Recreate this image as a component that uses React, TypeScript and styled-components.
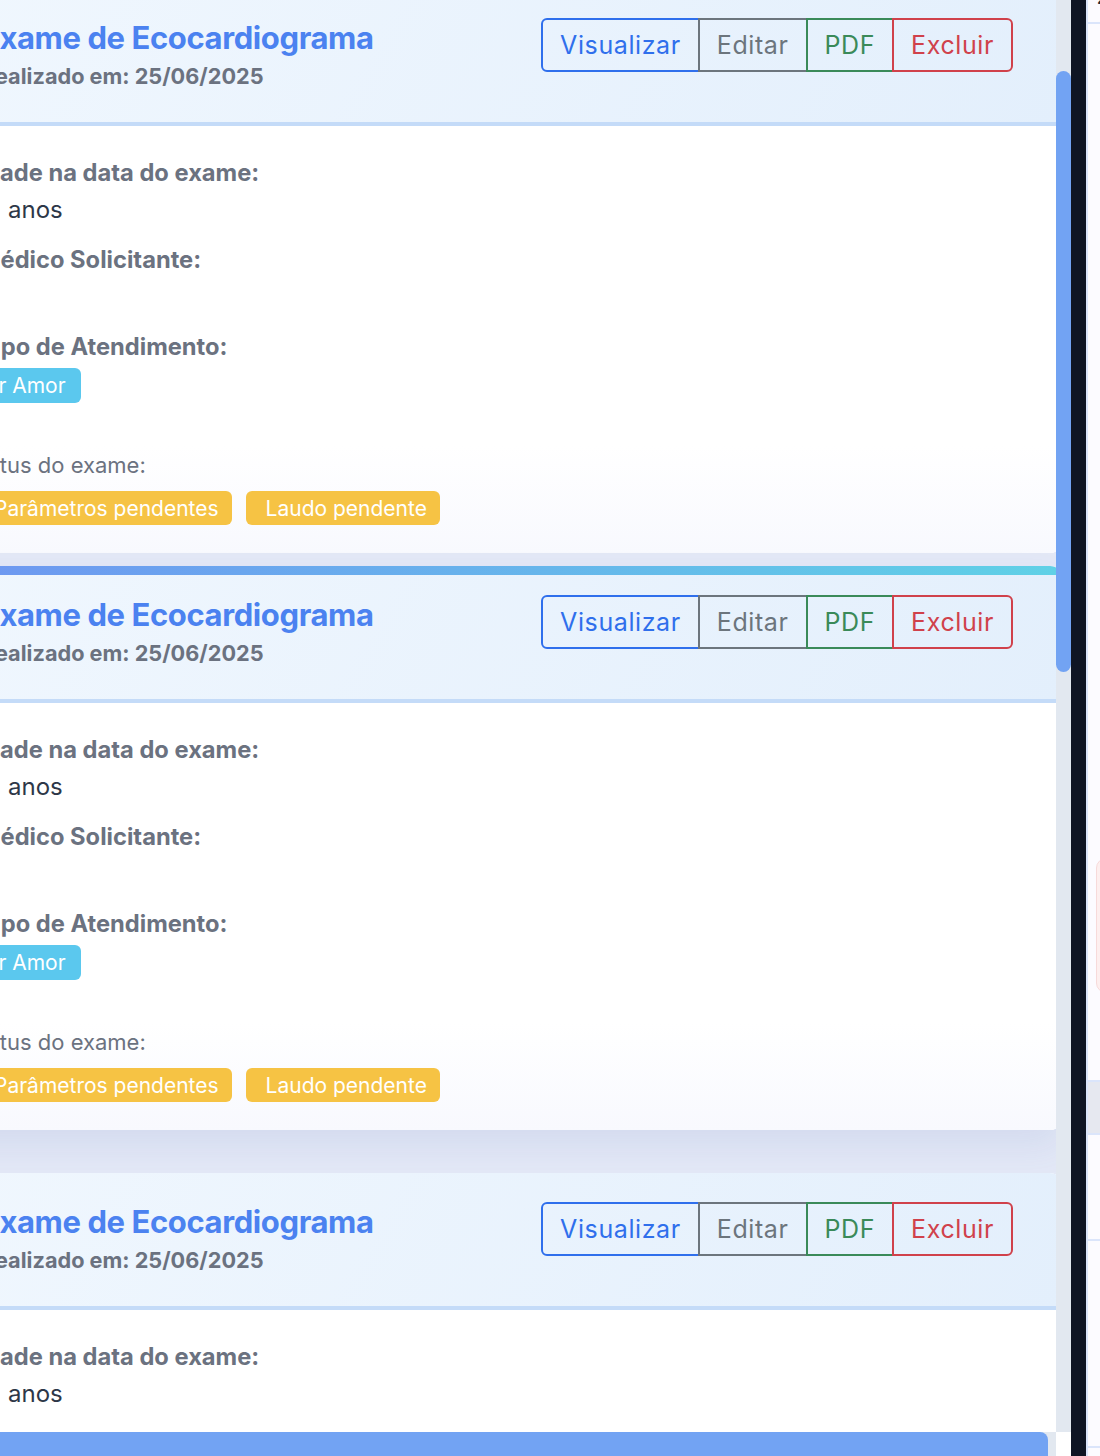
import React, { useLayoutEffect, useRef } from 'react';
import styled, { createGlobalStyle, css } from 'styled-components';

const GlobalStyle = createGlobalStyle`
  * { box-sizing: border-box; }
  html, body { margin: 0; padding: 0; height: 100%; overflow: hidden; }
  body {
    font-family: Inter, "Noto Sans", "Liberation Sans", sans-serif;
    background: #ffffff;
    -webkit-font-smoothing: antialiased;
  }
  #root { height: 100%; }
`;

const Shell = styled.div`
  display: flex;
  width: 1100px;
  height: 1456px;
  overflow: hidden;
`;

const Main = styled.main`
  width: 1071px;
  flex-shrink: 0;
  display: flex;
  flex-direction: column;
  background: #ffffff;
`;

const ScrollArea = styled.div`
  display: flex;
  height: 1432px;
  flex-shrink: 0;
`;

const Scroller = styled.div`
  flex: 1;
  min-width: 0;
  overflow: hidden;
  background: #e3e8f6;
`;

const ScrollTrack = styled.div`
  width: 15px;
  flex-shrink: 0;
  background: #e2e8f0;
  display: flex;
  flex-direction: column;
`;

const ScrollThumb = styled.div`
  margin-top: 71px;
  height: 601px;
  border-radius: 8px;
  background: #72a3f3;
`;

const List = styled.div`
  display: flex;
  flex-direction: column;
  gap: 28px;
  padding: 158px 0 322px;
  margin: 0 -6px 0 -60px;
`;

const Card = styled.article<{ $lifted?: boolean }>`
  position: relative;
  height: 564px;
  border-radius: 12px;
  overflow: hidden;
  background: #ffffff;

  ${(p) =>
    p.$lifted &&
    css`
      transform: translateY(-15px);
      box-shadow: 0 16px 34px rgba(80, 105, 190, 0.1);

      &::before {
        content: '';
        position: absolute;
        top: 0;
        left: 0;
        right: 0;
        height: 9px;
        background: linear-gradient(90deg, #6e96f1 0%, #5fd1e6 100%);
        z-index: 1;
      }
    `}
`;

const CardHeader = styled.header`
  display: flex;
  justify-content: space-between;
  align-items: flex-start;
  padding: 29px 49px 33px 41px;
  background: linear-gradient(120deg, #f0f7fe 0%, #e3effc 100%);
  border-bottom: 4px solid #c4dbf8;
`;

const TitleBlock = styled.div`
  display: flex;
  flex-direction: column;
`;

const Title = styled.h3`
  margin: 0;
  font-size: 31px;
  line-height: 40px;
  font-weight: 700;
  letter-spacing: -0.4px;
  color: #4b82f0;
`;

const Subtitle = styled.p`
  margin: 5px 0 0;
  font-size: 21.7px;
  line-height: 26px;
  font-weight: 700;
  color: #6b7280;
`;

type Tone = 'primary' | 'secondary' | 'success' | 'danger';

const toneColor: Record<Tone, string> = {
  primary: '#2f6fec',
  secondary: '#6c757d',
  success: '#3a8a59',
  danger: '#d0414b',
};

const BtnGroup = styled.div`
  display: flex;
  height: 54px;
`;

const Btn = styled.button<{ $tone: Tone }>`
  font-family: inherit;
  font-size: 25px;
  letter-spacing: 0.6px;
  padding: 0 17px;
  background: transparent;
  border: 2px solid ${(p) => toneColor[p.$tone]};
  color: ${(p) => toneColor[p.$tone]};
  border-radius: 0;
  cursor: pointer;

  & + & {
    margin-left: -2px;
  }
  &:first-child {
    border-radius: 6px 0 0 6px;
  }
  &:last-child {
    border-radius: 0 6px 6px 0;
  }
`;

const CardBody = styled.div`
  padding: 32px 49px 28px 18.5px;
  background: linear-gradient(180deg, #ffffff 75%, #f8f9fe 100%);
`;

const Field = styled.div`
  margin-bottom: 20px;
`;

const Label = styled.div`
  padding-left: 20px;
  font-size: 23.7px;
  line-height: 30px;
  font-weight: 700;
  color: #6b7280;
`;

const Value = styled.div`
  margin-top: 7px;
  min-height: 30px;
  padding-left: 49.5px;
  font-size: 24px;
  line-height: 30px;
  color: #2d3748;
`;

const BadgeSlot = styled.div`
  margin-top: 6px;
  display: flex;
`;

const Badge = styled.span<{ $variant: 'info' | 'warning' }>`
  display: inline-flex;
  align-items: center;
  height: ${(p) => (p.$variant === 'info' ? 35 : 34)}px;
  padding: ${(p) => (p.$variant === 'info' ? '0 15px 0 14px' : '0 13px 0 20px')};
  border-radius: 6px;
  font-size: 21px;
  color: #ffffff;
  white-space: nowrap;
  background: ${(p) => (p.$variant === 'info' ? '#5bc8ee' : '#f6c344')};
`;

const StatusSection = styled.div`
  margin-top: 48px;
`;

const StatusLabel = styled.div`
  padding-left: 7.5px;
  font-size: 22px;
  line-height: 28px;
  color: #6b7280;
`;

const StatusBadges = styled.div`
  display: flex;
  gap: 14px;
  margin-top: 12px;
  padding-left: 15.5px;
`;

const FooterArea = styled.div`
  flex: 1;
  display: flex;
  padding-right: 15px;
  background: #ffffff;
`;

const FooterTrack = styled.div`
  flex: 1;
  display: flex;
  padding-right: 8px;
  background: #e2e8f0;
`;

const FooterBar = styled.div`
  flex: 1;
  background: #72a3f3;
  border-top-right-radius: 8px;
`;

const DarkStrip = styled.div`
  width: 15px;
  flex-shrink: 0;
  background: #0f1524;
`;

const SidePanel = styled.aside`
  flex: 1;
  min-width: 0;
  overflow: hidden;
  background: #fcfbff;
  border-left: 2px solid #dbe5fb;
`;

const SideInner = styled.div`
  width: 360px;
  display: flex;
  flex-direction: column;
`;

const SideHeader = styled.div`
  height: 24px;
  padding-left: 9px;
  border-bottom: 2px solid #dbe5fb;
  overflow: hidden;
`;

const SideHeaderText = styled.div`
  margin-top: -12px;
  font-size: 18px;
  line-height: 20px;
  font-weight: 600;
  color: #1f2937;
`;

const Alert = styled.div`
  margin: 834px 0 0 8px;
  height: 135px;
  border-radius: 10px;
  background: #fdefef;
  border: 1px solid #f7dada;
`;

const SideBand = styled.div`
  margin-top: 87px;
  height: 55px;
  background: #e6e8f0;
  border-top: 2px solid #dbe5fb;
  border-bottom: 2px solid #dbe5fb;
`;

const SideRow = styled.div<{ $h: number }>`
  height: ${(p) => p.$h}px;
  border-bottom: 2px solid #dbe5fb;
`;

type Exam = {
  id: number;
  data: string;
  idade: string;
  medico: string;
  atendimento: string;
};

const exams: Exam[] = [1, 2, 3, 4, 5].map((id) => ({
  id,
  data: '25/06/2025',
  idade: '',
  medico: '',
  atendimento: 'Por Amor',
}));

function ExamCard({ exam, lifted }: { exam: Exam; lifted?: boolean }) {
  return (
    <Card $lifted={lifted}>
      <CardHeader>
        <TitleBlock>
          <Title>Exame de Ecocardiograma</Title>
          <Subtitle>Realizado em: {exam.data}</Subtitle>
        </TitleBlock>
        <BtnGroup>
          <Btn $tone="primary">Visualizar</Btn>
          <Btn $tone="secondary">Editar</Btn>
          <Btn $tone="success">PDF</Btn>
          <Btn $tone="danger">Excluir</Btn>
        </BtnGroup>
      </CardHeader>
      <CardBody>
        <Field>
          <Label>Idade na data do exame:</Label>
          <Value>{exam.idade} anos</Value>
        </Field>
        <Field>
          <Label>Médico Solicitante:</Label>
          <Value>{exam.medico}</Value>
        </Field>
        <Field>
          <Label>Tipo de Atendimento:</Label>
          <BadgeSlot>
            <Badge $variant="info">{exam.atendimento}</Badge>
          </BadgeSlot>
        </Field>
        <StatusSection>
          <StatusLabel>Status do exame:</StatusLabel>
          <StatusBadges>
            <Badge $variant="warning">Parâmetros pendentes</Badge>
            <Badge $variant="warning">Laudo pendente</Badge>
          </StatusBadges>
        </StatusSection>
      </CardBody>
    </Card>
  );
}

export default function App() {
  const scrollRef = useRef<HTMLDivElement>(null);

  useLayoutEffect(() => {
    if (scrollRef.current) scrollRef.current.scrollTop = 169;
  }, []);

  return (
    <>
      <GlobalStyle />
      <Shell>
        <Main>
          <ScrollArea>
            <Scroller ref={scrollRef}>
              <List>
                {exams.map((exam, i) => (
                  <ExamCard key={exam.id} exam={exam} lifted={i === 1} />
                ))}
              </List>
            </Scroller>
            <ScrollTrack>
              <ScrollThumb />
            </ScrollTrack>
          </ScrollArea>
          <FooterArea>
            <FooterTrack>
              <FooterBar />
            </FooterTrack>
          </FooterArea>
        </Main>
        <DarkStrip />
        <SidePanel>
          <SideInner>
            <SideHeader>
              <SideHeaderText>25/06/2025</SideHeaderText>
            </SideHeader>
            <Alert />
            <SideBand />
            <SideRow $h={106} />
            <SideRow $h={207} />
          </SideInner>
        </SidePanel>
      </Shell>
    </>
  );
}
